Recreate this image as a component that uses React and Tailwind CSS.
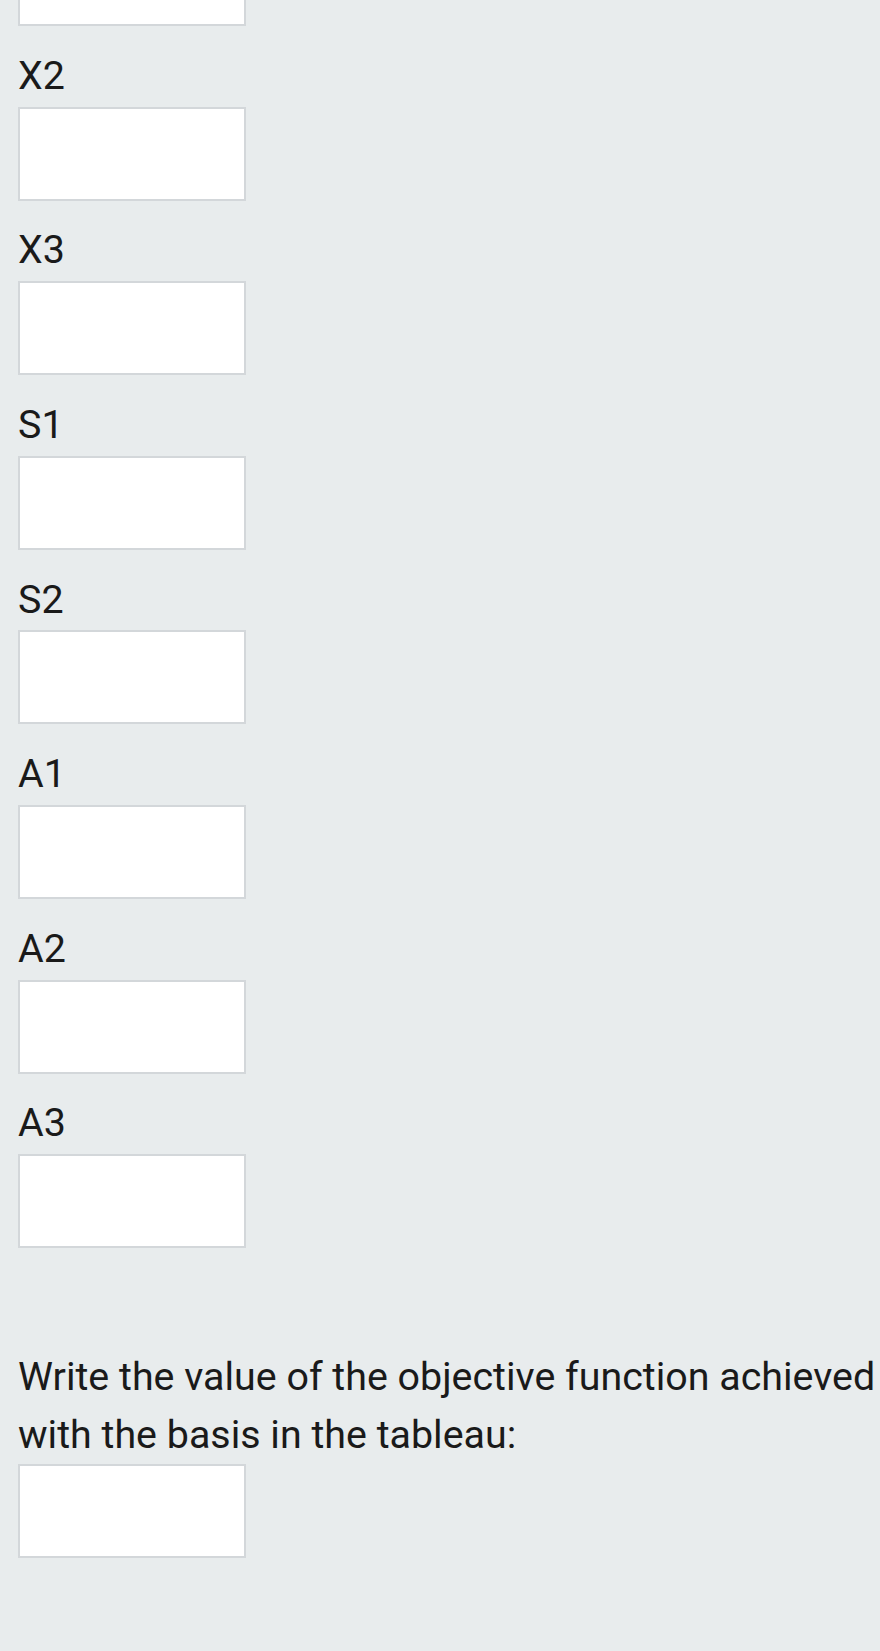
const labels = ["X2", "X3", "S1", "S2", "A1", "A2", "A3"];

const Box = () => (
  <div className="mt-[1.8px] h-[94px] w-[228px] border-2 border-[#d3d7da] bg-white" />
);

export default function App() {
  return (
    <div
      className="min-h-screen bg-[#e8eced] px-[18px] text-[39.4px] leading-[58px] text-[#1a1a1a]"
      style={{ fontFamily: "Roboto, 'Noto Sans', sans-serif" }}
    >
      <div className="h-[26px] w-[228px] border-2 border-t-0 border-[#d3d7da] bg-white" />

      {labels.map((label) => (
        <div key={label} className="pt-[20.8px]">
          <div>{label}</div>
          <Box />
        </div>
      ))}

      <p className="mt-[100px] whitespace-nowrap">
        Write the value of the objective function achieved
        <br />
        with the basis in the tableau:
      </p>
      <div className="h-[94px] w-[228px] border-2 border-[#d3d7da] bg-white" />
    </div>
  );
}
